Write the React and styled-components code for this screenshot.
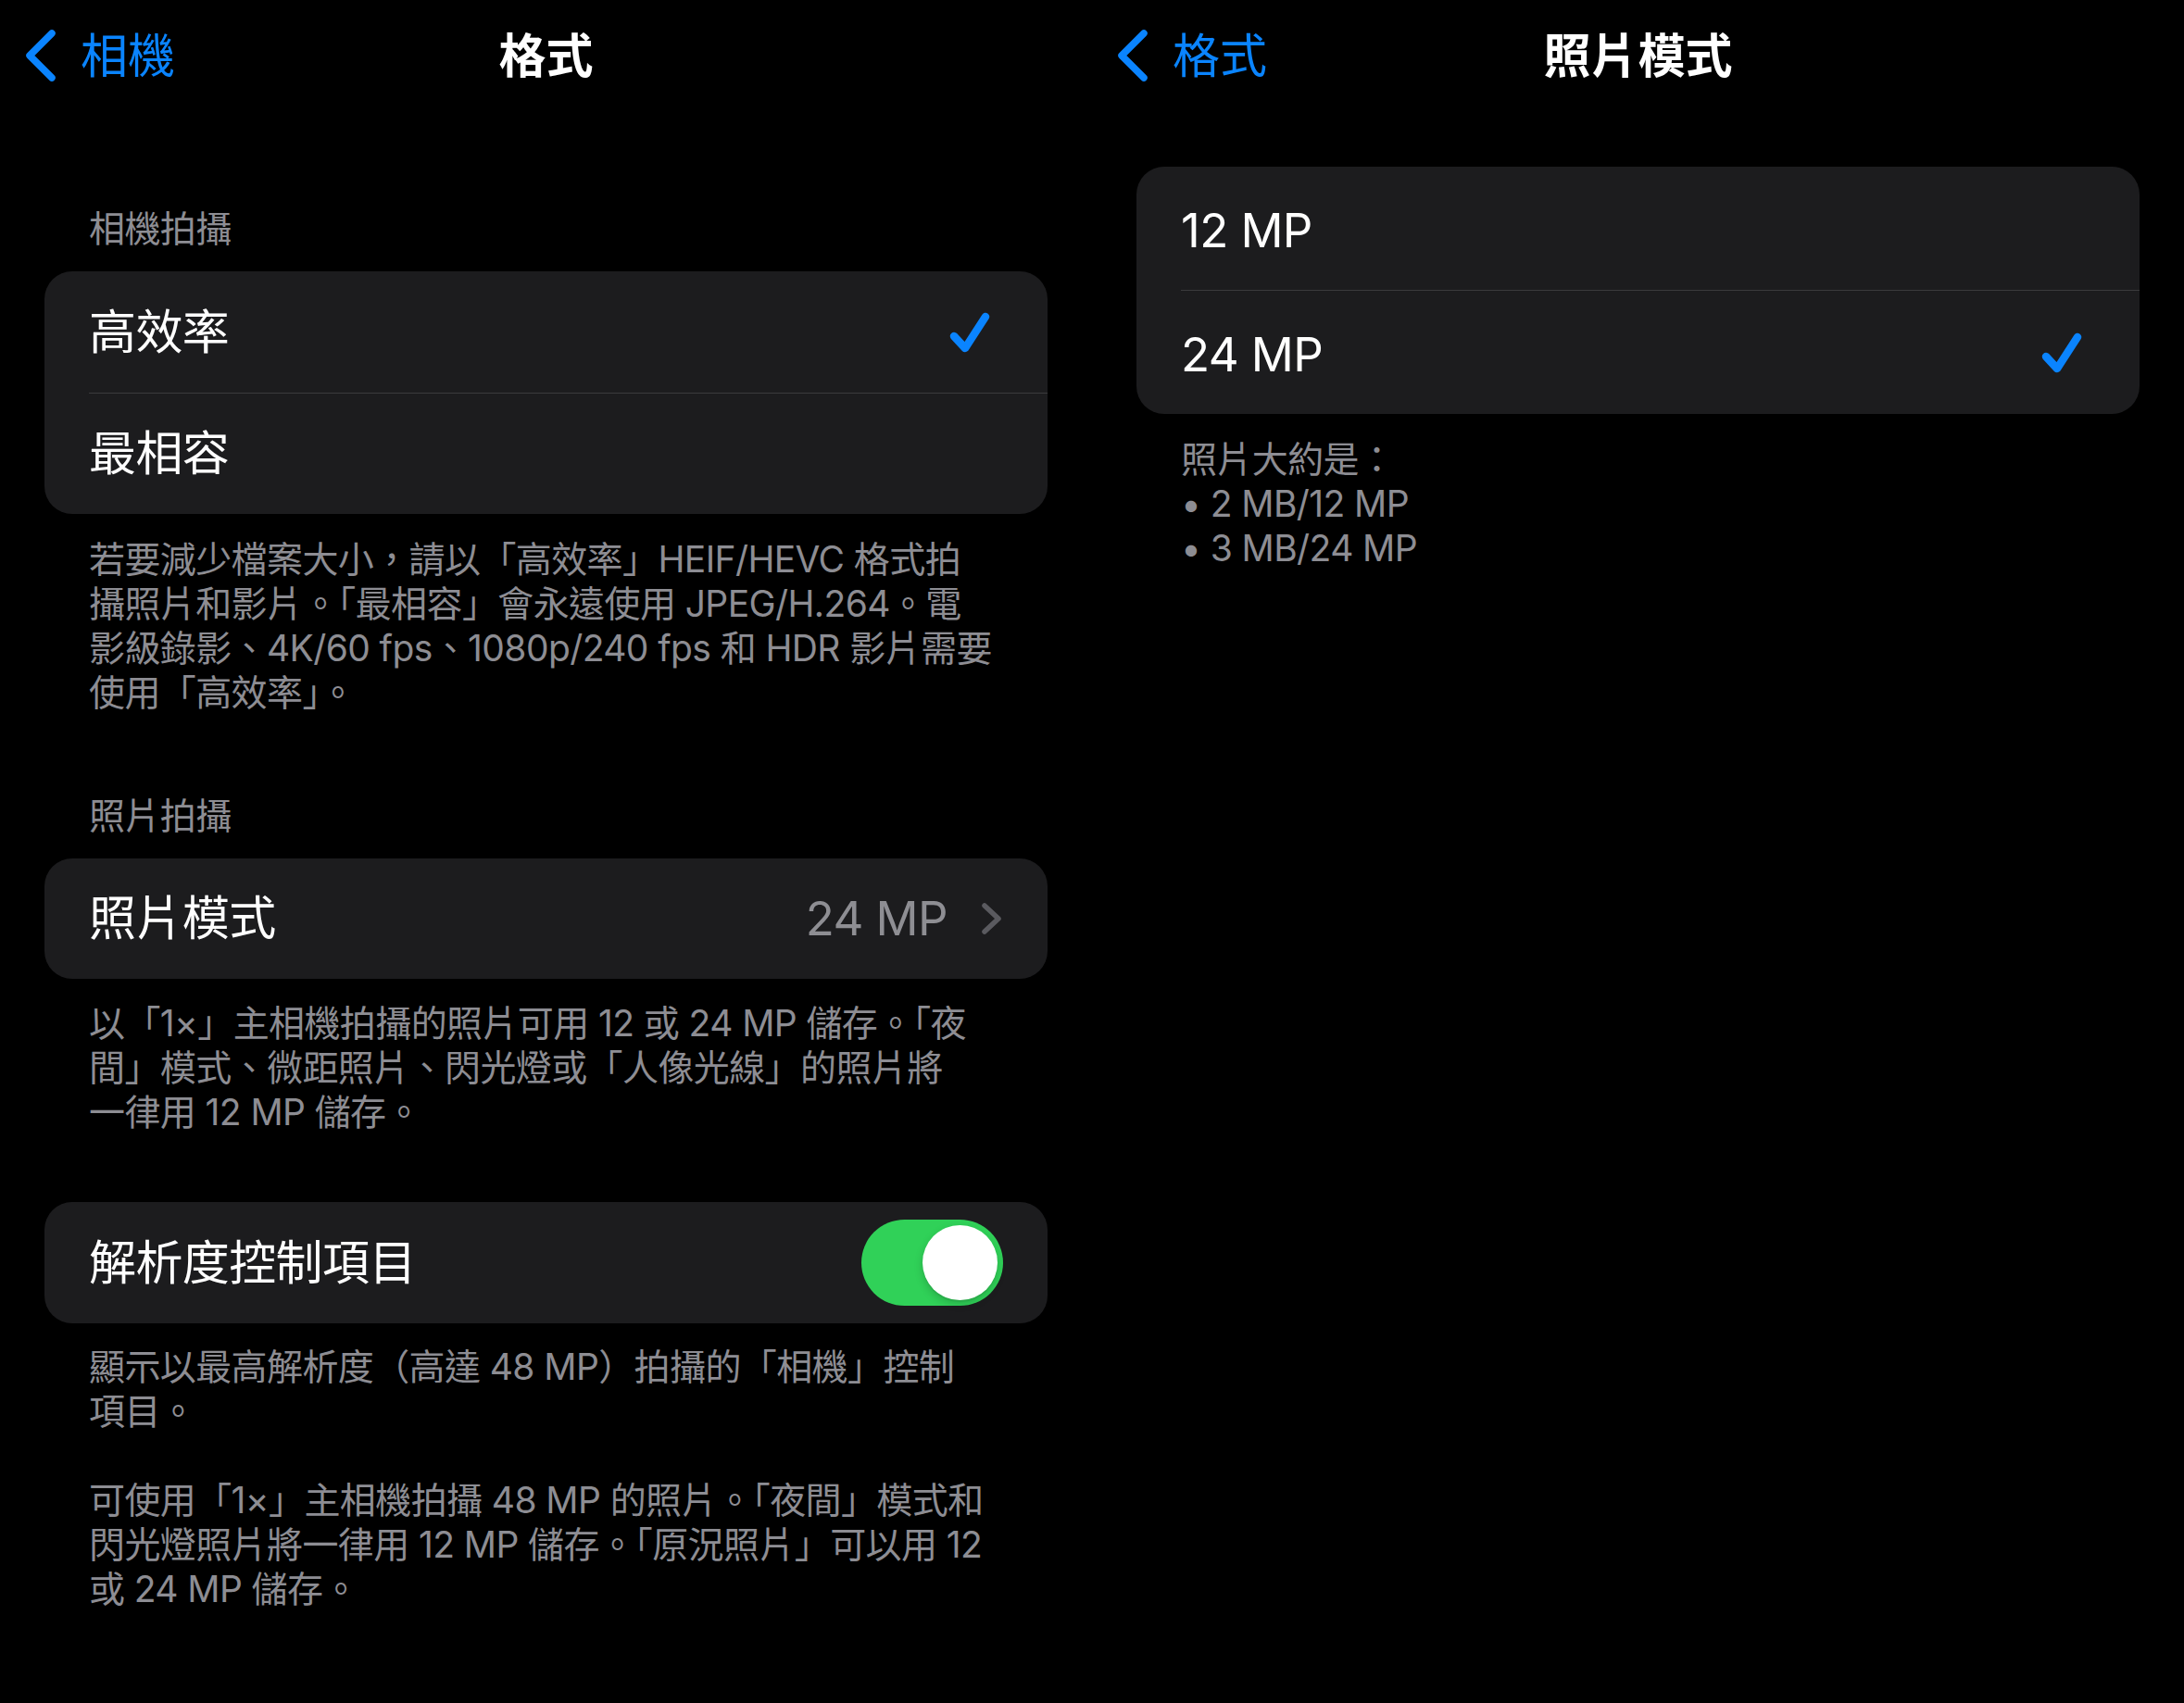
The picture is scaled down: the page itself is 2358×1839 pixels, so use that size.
import React from 'react';
import styled, { createGlobalStyle } from 'styled-components';

const GlobalStyle = createGlobalStyle`
  html, body {
    margin: 0;
    padding: 0;
    background: #000;
  }
  body {
    font-family: Inter, "Noto Sans CJK TC", sans-serif;
    color: #fff;
    letter-spacing: -0.6px;
    -webkit-font-smoothing: antialiased;
  }
  * { box-sizing: border-box; }
`;

const Screen = styled.div`
  display: flex;
  width: 2358px;
  height: 1839px;
  background: #000;
  overflow: hidden;
`;

const Panel = styled.div`
  flex: none;
  width: 1179px;
  display: flex;
  flex-direction: column;
`;

const NavBar = styled.div`
  height: 120px;
  display: grid;
  grid-template-columns: 1fr auto 1fr;
  align-items: center;
  padding: 0 26px;
`;

const BackButton = styled.div`
  display: flex;
  align-items: center;
  gap: 25px;
  color: #0a84ff;
  font-size: 51px;
  line-height: 1;
  letter-spacing: 0;
  justify-self: start;
`;

const Title = styled.div`
  font-size: 51px;
  font-weight: 600;
  line-height: 1;
  letter-spacing: 0;
  color: #fff;
`;

const Content = styled.div`
  display: flex;
  flex-direction: column;
  padding: 0 48px;
`;

const Header = styled.div`
  margin-top: ${(p) => p.$top}px;
  margin-bottom: 22px;
  padding: 0 48px;
  font-size: 39px;
  line-height: 48px;
  color: #8d8d93;
`;

const Card = styled.div`
  margin-top: ${(p) => p.$top || 0}px;
  background: #1c1c1e;
  border-radius: 30px;
  overflow: hidden;
`;

const Row = styled.div`
  display: flex;
  padding-left: 48px;
`;

const RowBody = styled.div`
  flex: 1;
  height: ${(p) => p.$h || 131}px;
  display: flex;
  align-items: center;
  justify-content: space-between;
  padding-right: ${(p) => p.$pr || 48}px;
  border-top: ${(p) => (p.$divider ? '1px solid #3a3a3c' : 'none')};
`;

const Label = styled.span`
  font-size: 51px;
  line-height: 1.2;
  color: #fff;
  padding-top: ${(p) => (p.$latin ? 4 : 0)}px;
`;

const Trail = styled.div`
  display: flex;
  align-items: center;
  gap: 36px;
`;

const Value = styled.span`
  font-size: 51px;
  line-height: 1.2;
  color: #8e8e93;
`;

const Footer = styled.div`
  margin-top: ${(p) => p.$top}px;
  padding: 0 48px;
  font-size: 39px;
  line-height: 48px;
  color: #8d8d93;
  white-space: nowrap;
  font-feature-settings: "chws";
`;

const FooterLine = styled.span`
  display: block;
  min-height: 48px;
`;

const Toggle = styled.div`
  width: 153px;
  height: 93px;
  border-radius: 47px;
  background: #30d158;
  display: flex;
  align-items: center;
  justify-content: ${(p) => (p.$on ? 'flex-end' : 'flex-start')};
  padding: 6px;
`;

const Knob = styled.div`
  width: 81px;
  height: 81px;
  border-radius: 50%;
  background: #fff;
  box-shadow: 0 4px 10px rgba(0, 0, 0, 0.18), 0 2px 1px rgba(0, 0, 0, 0.06);
`;

const ChevronLeft = () => (
  <svg width="36" height="60" viewBox="0 0 36 60" fill="none">
    <path
      d="M30 6 L6 30 L30 54"
      stroke="currentColor"
      strokeWidth="7.5"
      strokeLinecap="round"
      strokeLinejoin="round"
    />
  </svg>
);

const Check = () => (
  <svg width="46" height="46" viewBox="0 0 46 46" fill="none">
    <path
      d="M6 27 L18 40 L40 6"
      stroke="#0a84ff"
      strokeWidth="8.5"
      strokeLinecap="round"
      strokeLinejoin="round"
    />
  </svg>
);

const Disclosure = () => (
  <svg width="24" height="36" viewBox="0 0 24 36" fill="none">
    <path
      d="M4 4 L19 18 L4 32"
      stroke="#5a5a5f"
      strokeWidth="5.5"
      strokeLinecap="round"
      strokeLinejoin="round"
    />
  </svg>
);

const Nav = ({ back, title }) => (
  <NavBar>
    <BackButton>
      <ChevronLeft />
      <span>{back}</span>
    </BackButton>
    <Title>{title}</Title>
    <span />
  </NavBar>
);

const FooterText = ({ top, lines }) => (
  <Footer $top={top}>
    {lines.map((l, i) => (
      <FooterLine key={i}>{l}</FooterLine>
    ))}
  </Footer>
);

const formatFooter = [
  '若要減少檔案大小，請以「高效率」HEIF/HEVC 格式拍',
  '攝照片和影片。「最相容」會永遠使用 JPEG/H.264。電',
  '影級錄影、4K/60 fps、1080p/240 fps 和 HDR 影片需要',
  '使用「高效率」。',
];

const modeFooter = [
  '以「1×」主相機拍攝的照片可用 12 或 24 MP 儲存。「夜',
  '間」模式、微距照片、閃光燈或「人像光線」的照片將',
  '一律用 12 MP 儲存。',
];

const resFooter = [
  '顯示以最高解析度（高達 48 MP）拍攝的「相機」控制',
  '項目。',
  '',
  '可使用「1×」主相機拍攝 48 MP 的照片。「夜間」模式和',
  '閃光燈照片將一律用 12 MP 儲存。「原況照片」可以用 12',
  '或 24 MP 儲存。',
];

const sizeFooter = ['照片大約是：', '• 2 MB/12 MP', '• 3 MB/24 MP'];

const App = () => {
  return (
    <Screen>
      <GlobalStyle />
      <Panel>
        <Nav back="相機" title="格式" />
        <Content>
          <Header $top={103}>相機拍攝</Header>
          <Card>
            <Row>
              <RowBody $pr={61}>
                <Label>高效率</Label>
                <Check />
              </RowBody>
            </Row>
            <Row>
              <RowBody $divider>
                <Label>最相容</Label>
              </RowBody>
            </Row>
          </Card>
          <FooterText top={25} lines={formatFooter} />

          <Header $top={85}>照片拍攝</Header>
          <Card>
            <Row>
              <RowBody $h={130} $pr={48}>
                <Label>照片模式</Label>
                <Trail>
                  <Value>24 MP</Value>
                  <Disclosure />
                </Trail>
              </RowBody>
            </Row>
          </Card>
          <FooterText top={24} lines={modeFooter} />

          <Card $top={73}>
            <Row>
              <RowBody $pr={48}>
                <Label>解析度控制項目</Label>
                <Toggle $on>
                  <Knob />
                </Toggle>
              </RowBody>
            </Row>
          </Card>
          <FooterText top={23} lines={resFooter} />
        </Content>
      </Panel>

      <Panel>
        <Nav back="格式" title="照片模式" />
        <Content>
          <Card $top={60}>
            <Row>
              <RowBody $h={133}>
                <Label $latin>12 MP</Label>
              </RowBody>
            </Row>
            <Row>
              <RowBody $h={134} $divider $pr={61}>
                <Label $latin>24 MP</Label>
                <Check />
              </RowBody>
            </Row>
          </Card>
          <FooterText top={25} lines={sizeFooter} />
        </Content>
      </Panel>
    </Screen>
  );
};

export default App;
